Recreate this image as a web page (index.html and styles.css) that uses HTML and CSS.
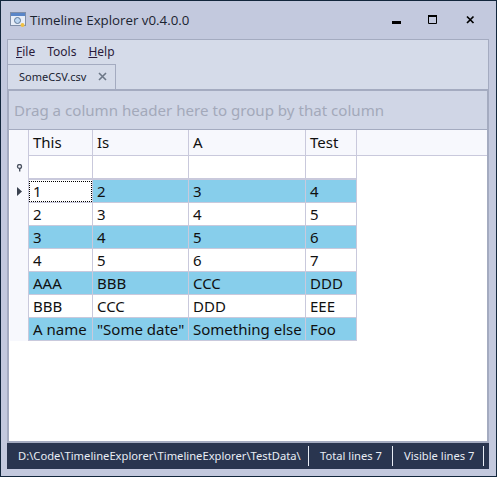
FILE: index.html
```html
<!DOCTYPE html>
<html>
<head>
    <title>Timeline Explorer</title>
    <link rel="stylesheet" href="styles.css">
</head>
<body>
    <div class="window">
        <div class="titlebar">
            <svg class="appicon" width="16" height="16" viewBox="0 0 16 16">
                <rect x="0.5" y="0.5" width="15" height="13" fill="#e8eef8" stroke="#7f8ea8"/>
                <rect x="1" y="1" width="14" height="3" fill="#5a86c8"/>
                <circle cx="7.5" cy="8.5" r="3" fill="#bcd6f2" stroke="#5f7896"/>
                <circle cx="12.5" cy="13" r="2" fill="#f0c040"/>
            </svg>
            <span class="apptitle">Timeline Explorer v0.4.0.0</span>
            <div class="winbuttons">
                <svg width="10" height="10" viewBox="0 0 10 10"><rect x="0" y="6" width="9" height="3" fill="#000"/></svg>
                <svg width="10" height="10" viewBox="0 0 10 10"><path d="M0.5 0.5h8v8h-8z" fill="none" stroke="#000"/><rect x="0" y="0" width="9" height="2"/></svg>
                <svg class="closebtn" width="10" height="10" viewBox="0 0 10 10"><path d="M1 1.5l6.5 6.5M7.5 1.5L1 8" fill="none" stroke="#000" stroke-width="1.7"/></svg>
            </div>
        </div>
        <div class="main">
            <div class="tabarea">
                <div class="menu">
                    <span><u>F</u>ile</span>
                    <span>Tools</span>
                    <span><u>H</u>elp</span>
                </div>
                <div class="tab">
                    <span>SomeCSV.csv</span>
                    <svg width="9" height="9" viewBox="0 0 9 9"><path d="M1 1l7 7M8 1L1 8" fill="none" stroke="#6d7787" stroke-width="1.6"/></svg>
                </div>
            </div>
            <div class="content">
                <div class="grouppanel">Drag a column header here to group by that column</div>
                <div class="gridwrap">
                    <div class="grid">
                        <div class="row head">
                            <div class="ind"></div>
                            <div class="cell c1">This</div>
                            <div class="cell c2">Is</div>
                            <div class="cell c3">A</div>
                            <div class="cell c4">Test</div>
                            <div class="headrest"></div>
                        </div>
                        <div class="row filter">
                            <div class="ind">
                                <svg width="7" height="8" viewBox="0 0 7 8"><circle cx="3.5" cy="2.5" r="2" fill="none" stroke="#4a5260" stroke-width="1.3"/><rect x="3" y="4" width="1.4" height="3.5" fill="#4a5260"/></svg>
                            </div>
                            <div class="cell c1"></div>
                            <div class="cell c2"></div>
                            <div class="cell c3"></div>
                            <div class="cell c4"></div>
                        </div>
                        <div class="row data alt">
                            <div class="ind">
                                <svg width="5" height="9" viewBox="0 0 5 9"><path d="M0 0l5 4.5L0 9z" fill="#3a4250"/></svg>
                            </div>
                            <div class="cell c1 focused">1</div>
                            <div class="cell c2">2</div>
                            <div class="cell c3">3</div>
                            <div class="cell c4">4</div>
                        </div>
                        <div class="row data">
                            <div class="ind"></div>
                            <div class="cell c1">2</div>
                            <div class="cell c2">3</div>
                            <div class="cell c3">4</div>
                            <div class="cell c4">5</div>
                        </div>
                        <div class="row data alt">
                            <div class="ind"></div>
                            <div class="cell c1">3</div>
                            <div class="cell c2">4</div>
                            <div class="cell c3">5</div>
                            <div class="cell c4">6</div>
                        </div>
                        <div class="row data">
                            <div class="ind"></div>
                            <div class="cell c1">4</div>
                            <div class="cell c2">5</div>
                            <div class="cell c3">6</div>
                            <div class="cell c4">7</div>
                        </div>
                        <div class="row data alt">
                            <div class="ind"></div>
                            <div class="cell c1">AAA</div>
                            <div class="cell c2">BBB</div>
                            <div class="cell c3">CCC</div>
                            <div class="cell c4">DDD</div>
                        </div>
                        <div class="row data">
                            <div class="ind"></div>
                            <div class="cell c1">BBB</div>
                            <div class="cell c2">CCC</div>
                            <div class="cell c3">DDD</div>
                            <div class="cell c4">EEE</div>
                        </div>
                        <div class="row data alt">
                            <div class="ind"></div>
                            <div class="cell c1">A name</div>
                            <div class="cell c2">"Some date"</div>
                            <div class="cell c3">Something else</div>
                            <div class="cell c4">Foo</div>
                        </div>
                    </div>
                </div>
            </div>
            <div class="statusbar">
                <div class="status path">D:\Code\TimelineExplorer\TimelineExplorer\TestData\</div>
                <div class="status total">Total lines 7</div>
                <div class="status visible">Visible lines 7</div>
            </div>
        </div>
    </div>
</body>
</html>
```

FILE: styles.css
```css
html, body{
    margin: 0;
    padding: 0;
    height: 100%;
}
body{
    font-family: "Noto Sans", sans-serif;
    overflow: hidden;
}
.window{
    box-sizing: border-box;
    width: 497px;
    height: 477px;
    border: 1px solid #12263c;
    background-color: #c3c9de;
    padding: 0 7px 7px 6px;
    display: flex;
    flex-direction: column;
}
.titlebar{
    height: 38px;
    flex: none;
    display: flex;
    align-items: center;
    padding-left: 3px;
}
.apptitle{
    margin-left: 4px;
    font-size: 13.3px;
    color: #1b2330;
    font-family: "Open Sans", sans-serif;
}
.winbuttons{
    margin-left: auto;
    display: flex;
    gap: 26px;
    padding-right: 13px;
}
.closebtn{
    margin-left: 2px;
}
.main{
    flex: 1;
    display: flex;
    flex-direction: column;
    min-height: 0;
}
.tabarea{
    height: 52px;
    flex: none;
    box-sizing: border-box;
    background-color: #d5dbe9;
    border: 1px solid #a4abc0;
    border-bottom: 2px solid #a4abc0;
    display: flex;
    flex-direction: column;
    justify-content: space-between;
}
.menu{
    display: flex;
    gap: 12px;
    padding: 3px 0 0 8px;
    font-size: 12px;
    color: #2a1a3a;
}
.tab{
    box-sizing: border-box;
    width: 108px;
    height: 25px;
    background-color: #d5dbe9;
    border: 1px solid #a4abc0;
    border-left: 0;
    border-bottom: 0;
    display: flex;
    align-items: center;
    justify-content: space-between;
    padding: 0 8px 2px 11px;
    font-size: 11px;
    color: #1c2433;
}
.content{
    flex: 1;
    min-height: 0;
    display: flex;
    flex-direction: column;
    background-color: #fff;
    border-left: 2px solid #a4abc0;
    border-right: 2px solid #a4abc0;
}
.grouppanel{
    height: 39px;
    flex: none;
    box-sizing: border-box;
    background-color: #d0d6e6;
    border-bottom: 1px solid #a4abc0;
    padding-left: 5px;
    line-height: 38px;
    font-size: 15.1px;
    color: #a3a9ba;
}
.gridwrap{
    flex: 1;
    min-height: 0;
    padding-left: 1px;
    border-bottom: 2px solid #a4abc0;
}
.grid{
    font-family: "Noto Sans", sans-serif;
    font-size: 15px;
    color: #101010;
}
.row{
    display: flex;
}
.ind{
    box-sizing: border-box;
    width: 18px;
    flex: none;
    background-color: #f7f8fd;
    display: flex;
    align-items: center;
    justify-content: center;
}
.cell{
    box-sizing: border-box;
    flex: none;
    padding-left: 4px;
    border-right: 1px solid #c9c9dc;
    white-space: nowrap;
    overflow: hidden;
}
.c1{ width: 65px; border-left: 1px solid #c9c9dc; }
.c2{ width: 96px; }
.c3{ width: 117px; }
.c4{ width: 51px; }
.head{
    height: 26px;
    line-height: 24px;
    background-color: #f7f8fd;
}
.head .cell{
    border-bottom: 1px solid #c9c9dc;
}
.headrest{
    flex: 1;
    border-bottom: 1px solid #c9c9dc;
}
.filter{
    height: 24px;
    background-color: #fff;
}
.filter .cell{
    border-bottom: 2px solid #c9c9dc;
}
.data{
    height: 23px;
    line-height: 22px;
}
.data .cell{
    border-bottom: 1px solid #c9c9dc;
}
.alt .cell{
    background-color: #87ceeb;
}
.alt .cell.focused{
    background-color: #fff;
    outline: 1px dotted #000;
    outline-offset: -2px;
}
.statusbar{
    height: 26px;
    flex: none;
    background-color: #29354f;
    color: #e8edf5;
    font-size: 11.2px;
    display: flex;
    align-items: center;
}
.status{
    box-sizing: border-box;
    height: 20px;
    line-height: 19px;
    border-right: 1px solid #e8edf5;
    white-space: nowrap;
    overflow: hidden;
}
.path{
    width: 302px;
    padding-left: 11px;
}
.total{
    width: 84px;
    padding-left: 11px;
}
.visible{
    width: 91px;
    padding-left: 11px;
}
```
